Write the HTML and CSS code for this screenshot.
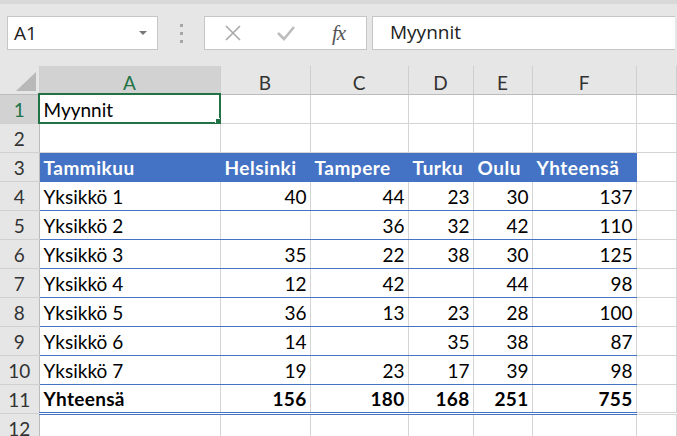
FILE: index.html
```html
<!DOCTYPE html>
<html>
<head>
  <title>Myynnit</title>
  <link rel="stylesheet" href="styles.css">
</head>
<body>
  <div class="toolbar">
    <div class="name-box">
      <span>A1</span>
      <span class="caret"></span>
    </div>
    <div class="grip"><i></i><i></i><i></i></div>
    <div class="fx-buttons">
      <svg class="icon" width="18" height="18" viewBox="0 0 18 18"><path d="M2 2 L16 16 M16 2 L2 16" stroke="#a9a9a9" stroke-width="1.6" fill="none"/></svg>
      <svg class="icon" width="20" height="18" viewBox="0 0 20 18"><path d="M2 9 L8 15 L18 3" stroke="#bdbdbd" stroke-width="2.6" fill="none"/></svg>
      <span class="fx">fx</span>
    </div>
    <div class="formula">Myynnit</div>
  </div>

  <table class="sheet">
    <colgroup>
      <col class="c-head">
      <col class="c-a">
      <col class="c-b">
      <col class="c-c">
      <col class="c-d">
      <col class="c-e">
      <col class="c-f">
      <col>
    </colgroup>
    <tr class="col-heads">
      <th class="corner"><span class="tri"></span></th>
      <th class="sel">A</th>
      <th>B</th>
      <th>C</th>
      <th>D</th>
      <th>E</th>
      <th>F</th>
      <th></th>
    </tr>
    <tr>
      <th class="sel">1</th>
      <td class="active">Myynnit<span class="handle"></span></td>
      <td></td><td></td><td></td><td></td><td></td><td></td>
    </tr>
    <tr>
      <th>2</th>
      <td></td><td></td><td></td><td></td><td></td><td></td><td></td>
    </tr>
    <tr class="thead">
      <th>3</th>
      <td>Tammikuu</td>
      <td>Helsinki</td>
      <td>Tampere</td>
      <td>Turku</td>
      <td>Oulu</td>
      <td>Yhteensä</td>
      <td class="out"></td>
    </tr>
    <tr class="row">
      <th>4</th>
      <td>Yksikkö 1</td><td class="n">40</td><td class="n">44</td><td class="n">23</td><td class="n">30</td><td class="n">137</td><td class="out"></td>
    </tr>
    <tr class="row">
      <th>5</th>
      <td>Yksikkö 2</td><td class="n"></td><td class="n">36</td><td class="n">32</td><td class="n">42</td><td class="n">110</td><td class="out"></td>
    </tr>
    <tr class="row">
      <th>6</th>
      <td>Yksikkö 3</td><td class="n">35</td><td class="n">22</td><td class="n">38</td><td class="n">30</td><td class="n">125</td><td class="out"></td>
    </tr>
    <tr class="row">
      <th>7</th>
      <td>Yksikkö 4</td><td class="n">12</td><td class="n">42</td><td class="n"></td><td class="n">44</td><td class="n">98</td><td class="out"></td>
    </tr>
    <tr class="row">
      <th>8</th>
      <td>Yksikkö 5</td><td class="n">36</td><td class="n">13</td><td class="n">23</td><td class="n">28</td><td class="n">100</td><td class="out"></td>
    </tr>
    <tr class="row">
      <th>9</th>
      <td>Yksikkö 6</td><td class="n">14</td><td class="n"></td><td class="n">35</td><td class="n">38</td><td class="n">87</td><td class="out"></td>
    </tr>
    <tr class="row">
      <th>10</th>
      <td>Yksikkö 7</td><td class="n">19</td><td class="n">23</td><td class="n">17</td><td class="n">39</td><td class="n">98</td><td class="out"></td>
    </tr>
    <tr class="total">
      <th>11</th>
      <td>Yhteensä</td><td class="n">156</td><td class="n">180</td><td class="n">168</td><td class="n">251</td><td class="n">755</td><td class="out"></td>
    </tr>
    <tr>
      <th>12</th>
      <td></td><td></td><td></td><td></td><td></td><td></td><td></td>
    </tr>
  </table>
</body>
</html>
```

FILE: styles.css
```css
body {
  margin: 0;
  width: 677px;
  height: 436px;
  overflow: hidden;
  background: white;
  font-family: Lato, 'Noto Sans', sans-serif;
  color: #000;
}

/* Formula bar */
.toolbar {
  height: 66px;
  border-top: 4px solid #d8d8d8;
  background: #e6e6e6;
  display: flex;
  align-items: flex-start;
  padding: 12px 0 0 7px;
  box-sizing: border-box;
}

.name-box {
  width: 151px;
  height: 34px;
  background: white;
  border: 1px solid #c6c6c6;
  box-sizing: border-box;
  display: flex;
  align-items: center;
  justify-content: space-between;
  padding: 0 10px 0 6px;
  font-family: 'Open Sans', sans-serif;
  font-size: 19px;
  color: #222;
}

.caret {
  width: 0;
  height: 0;
  border-left: 4px solid transparent;
  border-right: 4px solid transparent;
  border-top: 4px solid #777;
}

.grip {
  width: 46px;
  height: 34px;
  display: flex;
  flex-direction: column;
  align-items: center;
  justify-content: center;
  gap: 5px;
}

.grip i {
  width: 3px;
  height: 3px;
  background: #a6a6a6;
}

.fx-buttons {
  width: 163px;
  height: 34px;
  background: white;
  border: 1px solid #c6c6c6;
  box-sizing: border-box;
  display: flex;
  align-items: center;
  padding-left: 19px;
}

.fx-buttons .icon {
  margin-right: 34px;
}

.fx-buttons .icon + .icon {
  margin-right: 36px;
}

.fx {
  font-family: 'Liberation Serif', serif;
  font-style: italic;
  font-size: 21px;
  color: #555;
  letter-spacing: -1px;
}

.formula {
  flex: 1;
  height: 34px;
  margin-left: 5px;
  margin-right: 2px;
  background: white;
  border: 1px solid #c6c6c6;
  border-right: none;
  box-sizing: border-box;
  padding-left: 17px;
  font-family: 'Open Sans', sans-serif;
  font-size: 19px;
  line-height: 31px;
  color: #222;
}

/* Grid */
.sheet {
  border-collapse: collapse;
  table-layout: fixed;
  width: 677px;
  font-size: 19px;
}

.c-head { width: 39px; }
.c-a { width: 181px; }
.c-b { width: 90px; }
.c-c { width: 98px; }
.c-d { width: 65px; }
.c-e { width: 59px; }
.c-f { width: 104px; }

.sheet tr {
  height: 29px;
}

.sheet tr.col-heads {
  height: 28px;
}

.sheet td, .sheet th {
  padding: 0 3px 3px 4px;
  border-right: 1px solid #d4d4d4;
  border-bottom: 1px solid #d4d4d4;
  white-space: nowrap;
  overflow: hidden;
  line-height: 20px;
  vertical-align: bottom;
}

.sheet th {
  background: #e6e6e6;
  font-weight: normal;
  color: #333;
  text-align: center;
  padding: 0 0 3px 0;
  border-right: 1px solid #bcbcbc;
  border-bottom: 1px solid #d0d0d0;
}

.col-heads th {
  padding-bottom: 1px;
  border-right: 1px solid #cfcfcf;
  border-bottom: 1px solid #bcbcbc;
}

.sheet th.sel {
  background: #d2d2d2;
  color: #217346;
}

.corner {
  position: relative;
}

.tri {
  position: absolute;
  right: 3px;
  bottom: 3px;
  width: 0;
  height: 0;
  border-left: 20px solid transparent;
  border-bottom: 19px solid #b8b8b8;
}

.active {
  position: relative;
  outline: 2px solid #217346;
  outline-offset: -1px;
}

.handle {
  position: absolute;
  right: -3px;
  bottom: -3px;
  width: 6px;
  height: 6px;
  background: #217346;
  border: 1px solid white;
  z-index: 2;
}

.n {
  text-align: right;
}

.thead td {
  background: #4472c4;
  color: white;
  font-weight: bold;
  letter-spacing: 0.5px;
  border-right-color: #4472c4;
  border-bottom-color: #4472c4;
}

.thead td.out, .row td.out, .total td.out {
  background: white;
  border-right-color: #d4d4d4;
  border-bottom-color: #d4d4d4;
}

.row td {
  border-bottom: 1px solid #4472c4;
}

.total td {
  font-weight: bold;
  letter-spacing: 0.3px;
  border-bottom: 3px double #4472c4;
}
```
